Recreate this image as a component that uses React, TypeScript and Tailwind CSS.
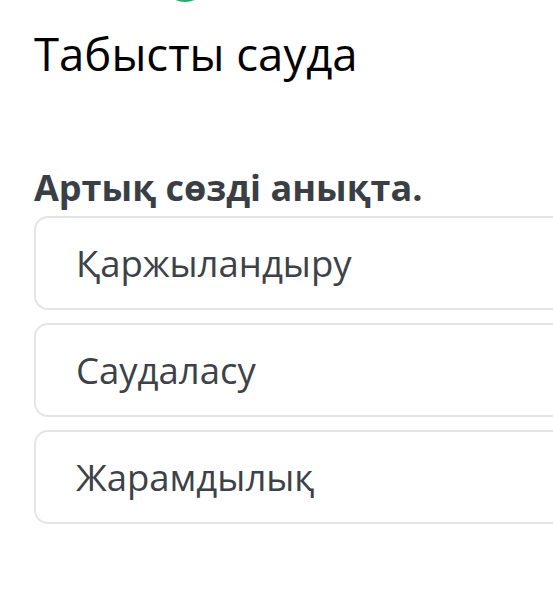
import React from "react";

const options = ["Қаржыландыру", "Саудаласу", "Жарамдылық"];

export default function App() {
  return (
    <div
      className="relative w-[553px] h-[590px] overflow-hidden bg-white"
      style={{ fontFamily: '"Open Sans", "Noto Sans", sans-serif' }}
    >
      <div className="absolute left-[160px] top-[-48px] w-[50px] h-[50px] rounded-full bg-[#2fa86c]" />
      <div className="pl-[34px] pt-[24px]">
        <h1 className="text-[45.5px] leading-[58px] text-black font-normal">Табысты сауда</h1>
        <h2 className="mt-[84px] text-[36px] leading-[44px] font-bold text-[#3a3e45]">
          Артық сөзді анықта.
        </h2>
        <div className="mt-[6px] flex flex-col gap-[13px] w-[620px]">
          {options.map((o) => (
            <div
              key={o}
              className="h-[94px] rounded-[14px] border-2 border-[#e3e5e7] bg-white flex items-center pl-[40px] text-[36.5px] text-[#3d4148]"
            >
              {o}
            </div>
          ))}
        </div>
      </div>
    </div>
  );
}
